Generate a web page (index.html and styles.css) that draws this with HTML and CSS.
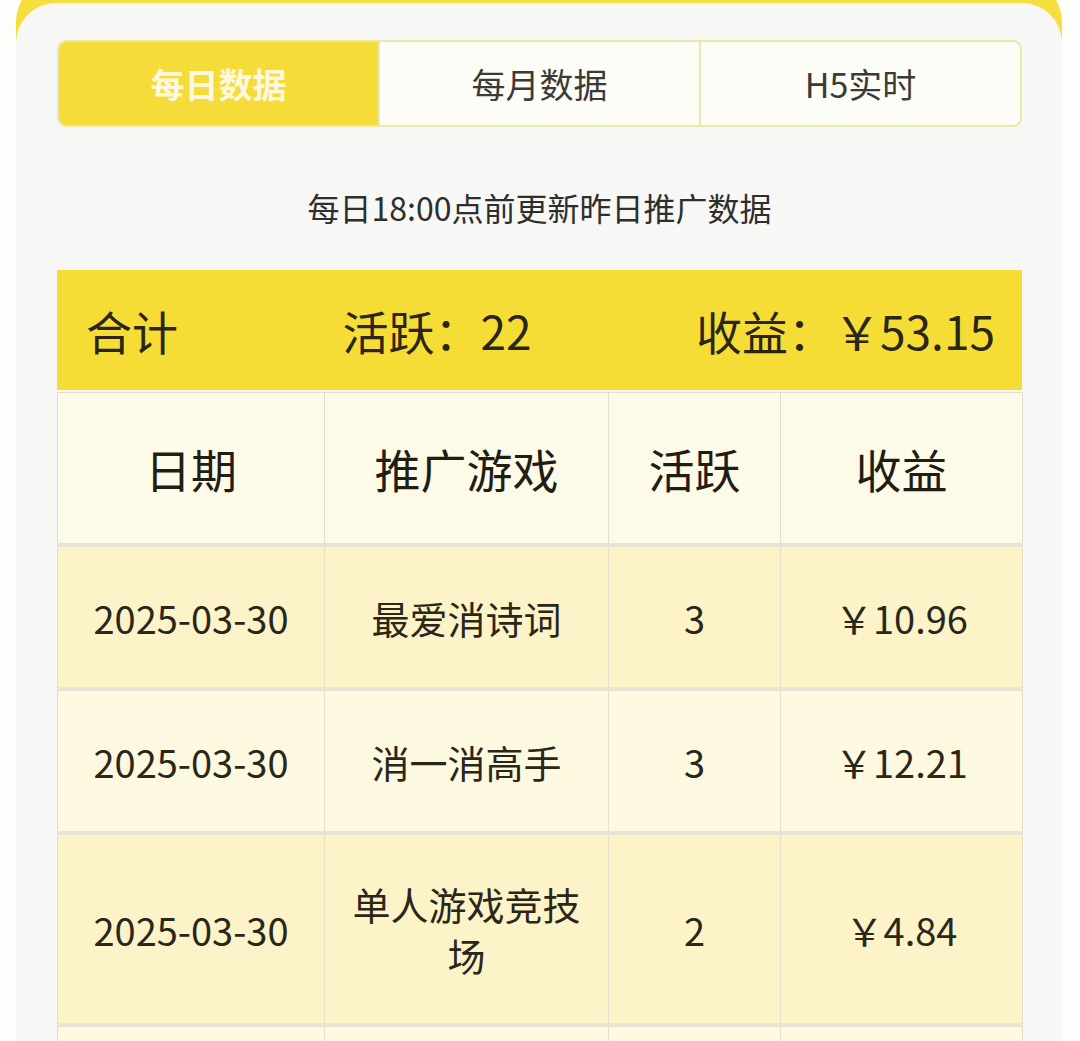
FILE: index.html
```html
<!DOCTYPE html>
<html lang="zh-CN">
<head>
<meta charset="utf-8">
<title>每日数据</title>
<link rel="stylesheet" href="styles.css">
</head>
<body>
<div class="frame">
  <div class="card">
    <div class="tabs">
      <div class="tab active">每日数据</div>
      <div class="tab">每月数据</div>
      <div class="tab">H5实时</div>
    </div>
    <div class="note">每日18:00点前更新昨日推广数据</div>
    <div class="summary">
      <span>合计</span>
      <span>活跃：22</span>
      <span>收益：￥53.15</span>
    </div>
    <table class="data">
      <colgroup>
        <col class="c-date"><col class="c-game"><col class="c-act"><col class="c-inc">
      </colgroup>
      <thead>
        <tr class="head"><th>日期</th><th>推广游戏</th><th>活跃</th><th>收益</th></tr>
      </thead>
      <tbody>
        <tr class="odd"><td>2025-03-30</td><td>最爱消诗词</td><td>3</td><td>￥10.96</td></tr>
        <tr class="even"><td>2025-03-30</td><td>消一消高手</td><td>3</td><td>￥12.21</td></tr>
        <tr class="odd tall"><td>2025-03-30</td><td>单人游戏竞技场</td><td>2</td><td>￥4.84</td></tr>
        <tr class="even"><td></td><td></td><td></td><td></td></tr>
      </tbody>
    </table>
  </div>
</div>
</body>
</html>
```

FILE: styles.css
```css
html, body {
  margin: 0;
  padding: 0;
  background: #fdfdfc;
  overflow: hidden;
  height: 1041px;
}
body {
  font-family: "Noto Sans CJK SC", "Noto Sans", sans-serif;
  color: #262318;
}
.frame {
  margin: -22px 18px 0 16px;
  padding-top: 25px;
  background: #f6df3c;
  border-radius: 44px 44px 0 0;
  height: 1100px;
}
.card {
  background: #f7f7f6;
  border-radius: 40px 40px 0 0;
  padding: 37px 40px 0 41px;
  height: 100%;
}
.tabs {
  display: flex;
  height: 87px;
  border: 2px solid #ece9a6;
  border-radius: 9px;
  overflow: hidden;
  background: #fdfdf7;
  box-sizing: border-box;
}
.tab {
  flex: 1;
  display: flex;
  align-items: center;
  justify-content: center;
  font-size: 34px;
  color: #3a3a36;
  border-left: 2px solid #ece9b0;
}
.tab:first-child { border-left: none; }
.tab.active {
  background: #f6dc38;
  color: #fdf8df;
  font-weight: 700;
}
.note {
  margin-top: 60px;
  height: 40px;
  line-height: 40px;
  text-align: center;
  font-size: 32px;
  color: #2e2e2c;
  margin-bottom: 43px;
}
.summary {
  height: 120px;
  background: #f6dd36;
  display: flex;
  align-items: center;
  justify-content: space-between;
  padding: 0 27px 0 29px;
  font-size: 46px;
  color: #2b2614;
}
.data {
  width: 965px;
  border-collapse: collapse;
  table-layout: fixed;
  margin-top: 2px;
}
.c-date { width: 267px; }
.c-game { width: 284px; }
.c-act { width: 172px; }
.c-inc { width: 242px; }
.data th, .data td {
  border: 1px solid #e2dfcd;
  text-align: center;
  vertical-align: middle;
  padding: 0 22px;
}
.data th {
  font-weight: 400;
  font-size: 46px;
  height: 150px;
  background: #fdfae8;
  color: #1f1d14;
}
.data td {
  font-size: 38px;
  line-height: 51px;
  height: 140px;
  color: #2a2719;
}
.data tr { border-top: 4px solid #e7e4d4; }
.data tr.head { border-top: none; }
.odd td { background: #fcf4c8; }
.even td { background: #fdf9e1; }
.tall td { height: 188px; }
```
